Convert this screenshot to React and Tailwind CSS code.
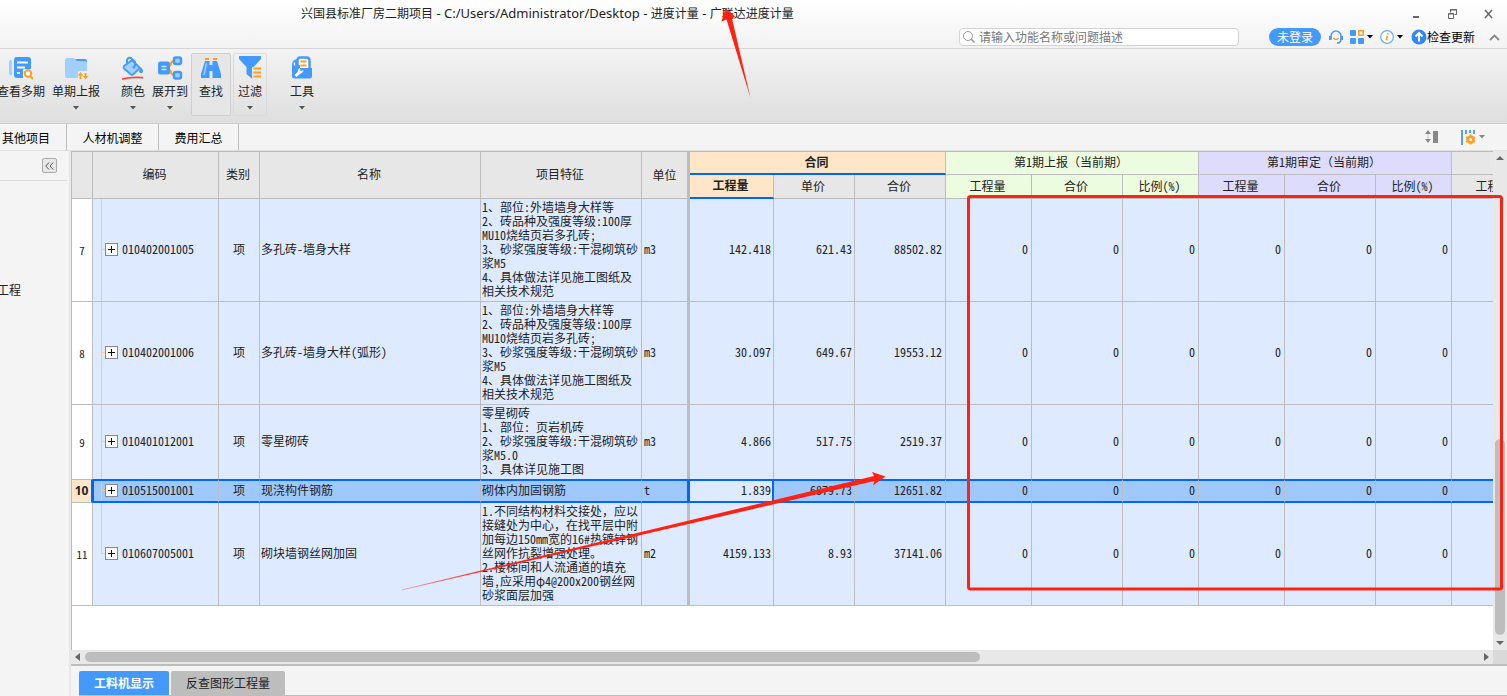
import React from 'react'

const BLUE = '#4499ff'
const ORANGE = '#ff9f1c'

const brick = [
  '1、部位:外墙墙身大样等',
  '2、砖品种及强度等级:100厚',
  'MU10烧结页岩多孔砖;',
  '3、砂浆强度等级:干混砌筑砂',
  '浆M5',
  '4、具体做法详见施工图纸及',
  '相关技术规范',
]

const rows = [
  { no: 7, code: '010402001005', name: '多孔砖-墙身大样', lines: brick, unit: 'm3', qty: '142.418', price: '621.43', total: '88502.82', height: 'h-[103px]' },
  { no: 8, code: '010402001006', name: '多孔砖-墙身大样(弧形)', lines: brick, unit: 'm3', qty: '30.097', price: '649.67', total: '19553.12', height: 'h-[103px]' },
  {
    no: 9,
    code: '010401012001',
    name: '零星砌砖',
    lines: ['零星砌砖', '1、部位: 页岩机砖', '2、砂浆强度等级:干混砌筑砂', '浆M5.0', '3、具体详见施工图'],
    unit: 'm3',
    qty: '4.866',
    price: '517.75',
    total: '2519.37',
    height: 'h-[74px]',
    beforeActive: true,
  },
  { no: 10, code: '010515001001', name: '现浇构件钢筋', lines: ['砌体内加固钢筋'], unit: 't', qty: '1.839', price: '6879.73', total: '12651.82', height: 'h-[24px]', active: true },
  {
    no: 11,
    code: '010607005001',
    name: '砌块墙钢丝网加固',
    lines: [
      '1.不同结构材料交接处，应以',
      '接缝处为中心，在找平层中附',
      '加每边150mm宽的16#热镀锌钢',
      '丝网作抗裂增强处理。',
      '2.楼梯间和人流通道的填充',
      '墙,应采用φ4@200x200钢丝网',
      '砂浆面层加强',
    ],
    unit: 'm2',
    qty: '4159.133',
    price: '8.93',
    total: '37141.06',
    height: 'h-[103px]',
    last: true,
  },
]

const columns = [
  'w-[21px]', 'w-[126px]', 'w-[41px]', 'w-[221px]', 'w-[161px]', 'w-[48px]',
  'w-[84px]', 'w-[81px]', 'w-[91px]',
  'w-[86px]', 'w-[91px]', 'w-[76px]',
  'w-[86px]', 'w-[91px]', 'w-[76px]',
  'w-[86px]',
]

function Caret({ className = 'text-[#555]' }) {
  return (
    <svg width="6" height="4" viewBox="0 0 6 4" className={className} aria-hidden="true">
      <path d="M0 0h6L3 3.5z" fill="currentColor" />
    </svg>
  )
}

/* ---------- toolbar icons ---------- */

function PeriodsIcon() {
  return (
    <svg width="24" height="24" viewBox="0 0 24 24" fill="none">
      <path d="M3 4v15H1.500Q0 19 0 17.500V6Q0 4 3 4z" fill="#9fd0ff" />
      <rect x="5" y="1" width="17" height="21" rx="3" fill={BLUE} />
      <path d="M8 6.500h11M8 11.500h8M8 17h3" stroke="#fff" strokeWidth="2" />
      <path d="M14 13h9v10h-9z" fill="#eeeeee" />
      <circle cx="19" cy="17.500" r="3.200" stroke={ORANGE} strokeWidth="2" fill="#fff" />
      <path d="M21 20l3 3" stroke={ORANGE} strokeWidth="2" />
    </svg>
  )
}

function ReportIcon() {
  return (
    <svg width="24" height="24" viewBox="0 0 24 24" fill="none">
      <path d="M11 3h10q2 0 2 2v9H11z" fill={BLUE} />
      <path d="M3 2h7l3 3h8q2 0 2 2v8h-9v7H3q-2 0-2-2V4q0-2 2-2z" fill="#9fd0ff" />
      <path d="M16.500 23v-5M21.500 17v5" stroke={ORANGE} strokeWidth="1.800" />
      <path d="M13.800 19.500l2.700-3.500 2.700 3.500zM18.800 20l2.700 3.500 2.700-3.500z" fill={ORANGE} />
    </svg>
  )
}

function ColorIcon() {
  return (
    <svg width="24" height="24" viewBox="0 0 24 24" fill="none">
      <path d="M3 10L11 4l8 8-7 6.500q-1 .8-2 0L3.500 13q-1.500-1.500-.5-3z" fill="#9fd0ff" stroke={BLUE} strokeWidth="1.800" />
      <path d="M6 7V4Q7 1 10 2l4 4v4" stroke={BLUE} strokeWidth="2" />
      <circle cx="13" cy="11" r="1.500" fill={BLUE} />
      <path d="M20 11.500q3 3 1.500 5-1.500 1-3 0-1-2 1.500-5z" fill={BLUE} />
      <path d="M1 23.500q10-2 22-1" stroke="#c9c9c9" strokeWidth="1.500" />
      <path d="M1 23q9-2.500 21-1.500" stroke="#ff4040" strokeWidth="1.500" />
    </svg>
  )
}

function ExpandIcon() {
  return (
    <svg width="26" height="24" viewBox="0 0 26 24" fill="none">
      <path d="M11 10.500q3-1 3-3t4-3M11 13.500q3 1 3 3t4 3" stroke={ORANGE} strokeWidth="2" />
      <rect x="1" y="5.500" width="12" height="13" rx="2.500" fill={BLUE} />
      <path d="M4.500 10.500h5M4.500 13.500h5" stroke="#cfe6ff" strokeWidth="1.500" />
      <rect x="17" y="1.500" width="7" height="6.500" rx="2" stroke={BLUE} strokeWidth="2.500" fill="#9fd0ff" />
      <rect x="17" y="16" width="7" height="6.500" rx="2" stroke={BLUE} strokeWidth="2.500" fill="#9fd0ff" />
    </svg>
  )
}

function FindIcon() {
  return (
    <svg width="24" height="24" viewBox="0 0 24 24" fill="none">
      <path d="M6 3h4M14 3h4" stroke={ORANGE} strokeWidth="2.200" />
      <path d="M6 5h4.500v17H2v-4zM13.500 5H18l4 13v4h-8.500z" fill={BLUE} />
      <path d="M10 9h4v6h-4z" fill={BLUE} />
      <path d="M7.500 7L5 19" stroke="#9fd0ff" strokeWidth="1.500" />
    </svg>
  )
}

function FilterIcon() {
  return (
    <svg width="24" height="24" viewBox="0 0 24 24" fill="none">
      <path d="M1 0h22v3l-7.500 8v13L8.500 18v-7L1 3z" fill={BLUE} />
      <path d="M14 11h10v13H14z" fill="#e8e8e8" />
      <path d="M15.500 12.500H23M15.500 16.500H23M15.500 20.500H23" stroke={ORANGE} strokeWidth="2" />
    </svg>
  )
}

function ToolsIcon() {
  return (
    <svg width="24" height="24" viewBox="0 0 24 24" fill="none">
      <path d="M7.500 13V4Q8 1.500 10 1.500h6q3.500 0 3.500 3V14" fill="#fff" stroke={BLUE} strokeWidth="2.400" />
      <path d="M10.500 5.500h6M10.500 9.500h6" stroke={ORANGE} strokeWidth="2.200" />
      <path d="M6.500 3Q2 4.500 2 9v11q0 2.500 2.500 2.500h15q2.500 0 2.500-2.500v-8h-6l-3-3H8z" fill={BLUE} />
      <path d="M10 4h7.500v8H10z" fill="#fff" />
      <path d="M10.500 5.500h6M10.500 9.500h6" stroke={ORANGE} strokeWidth="2" />
      <path d="M4.500 6.500v3" stroke="#fff" strokeWidth="1.500" />
      <path d="M4.500 19l3.500-3.500q-.5-2.500 2-3.500v2.500l2 .5 1-1.500q1 3-2.500 4L6.500 21z" fill="#fff" />
    </svg>
  )
}

const tools = [
  { label: '查看多期', icon: <PeriodsIcon />, box: 'w-[46px] items-start pl-2 border-transparent', end: true },
  { label: '单期上报', icon: <ReportIcon />, caret: true, box: 'w-[50px] ml-[5px] items-center border-transparent' },
  { label: '颜色', icon: <ColorIcon />, caret: true, box: 'w-7 ml-[18px] items-center border-transparent' },
  { label: '展开到', icon: <ExpandIcon />, caret: true, box: 'w-[38px] ml-1 items-center border-transparent' },
  { label: '查找', icon: <FindIcon />, box: 'w-10 ml-0.5 items-center border-[#cfcfcf] bg-[#e6e6e6]' },
  { label: '过滤', icon: <FilterIcon />, caret: true, box: 'w-[34px] ml-0.5 items-center border-[#dadada]' },
  { label: '工具', icon: <ToolsIcon />, caret: true, box: 'w-7 ml-[21px] items-center border-transparent' },
]

function TitleBar() {
  return (
    <header className="flex h-[49px] flex-col border-b border-[#d6d6d6] bg-linear-to-b from-white to-[#f2f2f2]">
      <div className="flex h-7 items-center justify-between pl-[301px] pr-3.5">
        <h1 className="whitespace-nowrap">
          兴国县标准厂房二期项目
          <span className="text-[13px]"> - C:/Users/Administrator/Desktop - </span>
          进度计量
          <span className="text-[13px]"> - </span>
          广联达进度计量
        </h1>
        <div className="flex h-6 items-center gap-[27px] text-[#666]">
          <button aria-label="最小化">
            <svg width="10" height="10" viewBox="0 0 10 10"><path d="M2 7h6v2H2z" fill="currentColor" /></svg>
          </button>
          <button aria-label="还原">
            <svg width="9" height="10" viewBox="0 0 9 10" fill="none" stroke="currentColor">
              <path d="M2.500 3.500v-3h6v5h-2M2 1h7M.5 4.500h5v5h-5zM0 5h6" />
            </svg>
          </button>
          <button aria-label="关闭">
            <svg width="9" height="10" viewBox="0 0 9 10" fill="none" stroke="currentColor" strokeWidth="1.500">
              <path d="M1 1l7 8M8 1L1 9" />
            </svg>
          </button>
        </div>
      </div>
      <div className="flex h-[18px] items-center justify-end pr-[7px]">
        <label className="mr-[30px] flex h-[18px] w-[280px] items-center gap-1 rounded-sm border border-[#d4d4d4] bg-white px-[3px]">
          <svg width="12" height="12" viewBox="0 0 12 12" fill="none" stroke="#999" aria-hidden="true">
            <circle cx="5" cy="5" r="4.500" />
            <path d="M8 8l3.500 3.500" strokeWidth="1.500" />
          </svg>
          <input
            type="text"
            aria-label="搜索功能"
            placeholder="请输入功能名称或问题描述"
            className="h-4 min-w-0 flex-1 bg-transparent pt-0.5 outline-none placeholder:text-[#777]"
          />
        </label>
        <button className="h-[18px] w-[52px] rounded-full bg-[#4499ff] leading-5 text-white">未登录</button>
        <button aria-label="客服" className="ml-2">
          <svg width="14" height="14" viewBox="0 0 14 14" fill="none">
            <path d="M2 9V6a5 5 0 0 1 10 0v3q0 4-4 4" stroke={BLUE} strokeWidth="1.500" />
            <path d="M0 6h2.500v4H0zM11.500 6H14v4h-2.500z" fill={BLUE} />
            <path d="M4.500 8q2.500 3 5 0" stroke={ORANGE} strokeWidth="1.500" />
          </svg>
        </button>
        <button aria-label="应用" className="ml-[7px] flex items-center gap-[3px]">
          <svg width="14" height="14" viewBox="0 0 14 14" fill="none">
            <rect width="6" height="6" rx="1" fill={BLUE} />
            <rect y="8" width="6" height="6" rx="1" fill={BLUE} />
            <rect x="8" y="8" width="6" height="6" rx="1" fill={BLUE} />
            <rect x="8.800" y=".8" width="4.400" height="4.400" stroke={ORANGE} strokeWidth="1.500" />
          </svg>
          <Caret className="text-black" />
        </button>
        <button aria-label="帮助" className="ml-[7px] flex items-center gap-[3px]">
          <svg width="14" height="14" viewBox="0 0 14 14" fill="none">
            <circle cx="7" cy="7" r="6.300" stroke="#6aaeff" strokeWidth="1.200" fill="#fff" />
            <path d="M7.300 6l-1 4.500M8 3l-.3 1.500" stroke={ORANGE} strokeWidth="1.700" />
          </svg>
          <Caret className="text-black" />
        </button>
        <button className="ml-2 flex items-center text-black">
          <svg width="16" height="16" viewBox="0 0 16 16" fill="none">
            <circle cx="8" cy="8" r="7.500" fill="#2f86f6" />
            <path d="M8 12.500V4.500M4.500 7.500L8 4l3.500 3.500" stroke="#fff" strokeWidth="2" />
          </svg>
          <span className="pt-0.5">检查更新</span>
        </button>
        <button aria-label="收起功能区" className="ml-3.5">
          <svg width="11" height="7" viewBox="0 0 11 7" fill="none" stroke="#888" strokeWidth="1.800">
            <path d="M1 6l4.500-4.500L10 6" />
          </svg>
        </button>
      </div>
    </header>
  )
}

function Toolbar() {
  return (
    <div className="flex h-[75px] border-b border-[#cdcdcd] bg-linear-to-b from-[#f3f3f3] to-[#dedede] pt-1">
      {tools.map((t) => (
        <button
          key={t.label}
          className={`flex h-[63px] shrink-0 flex-col rounded-xs border pt-0.5 ${t.box}`}
        >
          {t.icon}
          <span className={`flex w-full whitespace-nowrap pt-0.5 leading-5 ${t.end ? 'justify-end' : 'justify-center'}`}>{t.label}</span>
          {t.caret && <span className="flex h-3 items-center"><Caret /></span>}
        </button>
      ))}
    </div>
  )
}

function TabRow() {
  return (
    <nav className="flex h-[27px] items-stretch border-b border-[#e0e0e0] bg-[#f4f4f4] text-black">
      <a href="#other" className="flex w-[67px] items-center border-r border-[#bdbdbd] pl-0.5 pt-1">其他项目</a>
      <a href="#resources" className="flex w-[92px] items-center justify-center border-r border-[#bdbdbd] pt-1">人材机调整</a>
      <a href="#summary" className="flex w-20 items-center justify-center border-r border-[#bdbdbd] pt-1">费用汇总</a>
      <div className="ml-auto flex items-center pr-[22px]">
        <button aria-label="行高">
          <svg width="14" height="14" viewBox="0 0 14 14" fill="#888">
            <path d="M0 4l3-4 3 4zM0 9l3 4 3-4zM8 1h5v12H8z" />
            <path d="M2.500 3h1v7h-1z" opacity=".4" />
          </svg>
        </button>
        <button aria-label="列设置" className="ml-[22px] flex items-center gap-0.5">
          <svg width="16" height="16" viewBox="0 0 16 16" fill="none">
            <path d="M1 1v15M5 1v4M9 1v3M13 1v4" stroke={BLUE} strokeWidth="1.800" />
            <circle cx="9.500" cy="10.500" r="3" stroke={ORANGE} strokeWidth="2.600" />
            <path d="M9.500 5.500v10M5 8l9 5M14 8l-9 5" stroke={ORANGE} strokeWidth="1.800" />
            <circle cx="9.500" cy="10.500" r="1.500" fill="#fff" />
          </svg>
          <Caret className="text-[#888]" />
        </button>
      </div>
    </nav>
  )
}

function HeadCell({ className = 'bg-[#e7e7e7]', line = 'border-b border-[#bdbdbd]', ...rest }) {
  return <th className={`border-r border-r-[#bdbdbd] p-0 pb-0.5 pr-0.5 text-center font-normal ${line} ${className}`} {...rest} />
}

function Row({ row }) {
  const { active } = row
  let edge = 'border-b border-b-[#bdbdbd]'
  if (active) edge = 'border-y-2 border-y-[#0066ff] bg-[#9fc8fe]'
  if (row.beforeActive) edge = ''
  const cell = `p-0 pb-0.5 border-r border-r-[#bdbdbd] ${edge}`

  return (
    <tr className={row.height}>
      <th
        className={
          active
            ? "border-y border-r-2 border-y-[#bdbdbd] border-r-[#0066ff] bg-[#ffe6c8] p-0 text-center font-['Noto_Sans'] text-xs font-bold"
            : `border-r border-r-[#bdbdbd] bg-white p-0 text-center text-[11px] font-normal ${edge}`
        }
      >
        {row.no}
      </th>
      <td className={`relative ${cell} ${active ? 'border-l border-l-[#0066ff]' : ''}`}>
        <span className={`absolute top-0 w-px bg-[#ffc98c] ${active ? 'left-[7px]' : 'left-2'} ${row.last ? 'h-1/2' : 'h-full'}`} />
        <div className={`flex items-center ${active ? 'pl-[7px]' : 'pl-2'}`}>
          <span className="h-px w-1 bg-[#ffc98c]" />
          <button aria-label="展开" className="flex size-[13px] items-center justify-center border border-[#888] bg-white">
            <svg width="7" height="7" viewBox="0 0 7 7"><path d="M3 0h1v7H3zM0 3h7v1H0z" fill="#111" /></svg>
          </button>
          <span className="ml-1">{row.code}</span>
        </div>
      </td>
      <td className={`${cell} text-center`}>项</td>
      <td className={`${cell} pl-px`}>{row.name}</td>
      <td className={`${cell} whitespace-pre pl-px leading-[14px]`}>{row.lines.join('\n')}</td>
      <td className={`border-r-[3px] p-0 pb-0.5 pl-0.5 ${edge} ${active ? 'border-r-[#0066ff]' : 'border-r-[#bdbdbd]'}`}>{row.unit}</td>
      <td className={active ? 'border-y-2 border-r-2 border-[#0066ff] bg-[#deeaff] p-0 pb-0.5 pr-px text-right' : `${cell} pr-0.5 text-right`}>
        {row.qty}
      </td>
      <td className={`${cell} pr-0.5 text-right`}>{row.price}</td>
      <td className={`${cell} pr-[3px] text-right`}>{row.total}</td>
      {[0, 1, 2, 3, 4, 5].map((i) => (
        <td key={i} className={`${cell} pr-[3px] text-right`}>0</td>
      ))}
      <td className={cell}></td>
    </tr>
  )
}

function Grid() {
  const green = 'bg-[#ecfcde]'
  const violet = 'bg-[#dddcfc]'
  return (
    <table className="w-[1466px] table-fixed border-separate border-spacing-0 bg-[#deeaff] font-['Noto_Sans_Mono_CJK_SC','Noto_Sans_CJK_SC',monospace] text-xs text-[#222]">
      <colgroup>
        {columns.map((w, i) => <col key={i} className={w} />)}
      </colgroup>
      <thead>
        <tr className="h-[23px]">
          <HeadCell rowSpan={2} aria-label="序号" />
          <HeadCell rowSpan={2}>编码</HeadCell>
          <HeadCell rowSpan={2}>类别</HeadCell>
          <HeadCell rowSpan={2}>名称</HeadCell>
          <HeadCell rowSpan={2}>项目特征</HeadCell>
          <th rowSpan={2} className="border-b border-r-[3px] border-[#bdbdbd] bg-[#e7e7e7] p-0 text-center font-normal">单位</th>
          <HeadCell colSpan={3} className="bg-[#ffe6c8]" line="border-b-2 border-b-[#0066ff]"><b>合同</b></HeadCell>
          <HeadCell colSpan={3} className={green}>第1期上报（当前期）</HeadCell>
          <HeadCell colSpan={3} className={violet}>第1期审定（当前期）</HeadCell>
          <HeadCell aria-label="下一期" />
        </tr>
        <tr className="h-6">
          <HeadCell className="bg-[#ffe6c8]" line="border-b-2 border-b-[#0066ff]"><b>工程量</b></HeadCell>
          <HeadCell>单价</HeadCell>
          <HeadCell>合价</HeadCell>
          <HeadCell className={green}>工程量</HeadCell>
          <HeadCell className={green}>合价</HeadCell>
          <HeadCell className={green}>比例(%)</HeadCell>
          <HeadCell className={violet}>工程量</HeadCell>
          <HeadCell className={violet}>合价</HeadCell>
          <HeadCell className={violet}>比例(%)</HeadCell>
          <HeadCell>工程量</HeadCell>
        </tr>
      </thead>
      <tbody>
        {rows.map((row) => <Row key={row.no} row={row} />)}
      </tbody>
    </table>
  )
}

function SidePanel() {
  return (
    <aside className="w-[71px] shrink-0 border-r-2 border-[#e8e8e8] bg-[#f4f4f4]">
      <div className="mr-0.5 flex h-[30px] items-center justify-end border-b border-[#dcdcdc] pr-2.5">
        <button aria-label="折叠" className="flex size-[15px] items-center justify-center rounded-xs border border-[#aaa] bg-[#e8e8e8]">
          <svg width="9" height="8" viewBox="0 0 9 8" fill="none" stroke="#555">
            <path d="M4 .5L.8 4 4 7.500M8.200.5L5 4l3.200 3.500" />
          </svg>
        </button>
      </div>
      <div className="mt-[100px] flex h-5 w-[21px] items-center justify-end whitespace-nowrap">工程</div>
    </aside>
  )
}

/* Red pen marks drawn over the window */
function Marks() {
  return (
    <svg className="pointer-events-none absolute left-0 top-0" width="1507" height="696" viewBox="0 0 1507 696" fill="none" aria-hidden="true">
      <defs>
        <linearGradient id="fade" gradientUnits="userSpaceOnUse" x1="402" y1="590" x2="500" y2="567">
          <stop offset="0" stopColor="#ff2212" stopOpacity="0.4" />
          <stop offset="1" stopColor="#ff2212" />
        </linearGradient>
      </defs>
      <path d="M725.500 8l-4 13.500 5-2L750.500 98l-18.500-79.500 3-2z" fill="#ff2212" />
      <path d="M402 589.500L874 476l-2-4 13.500 4.500L873 485.500l1.500-4.500L402 590.300z" fill="url(#fade)" />
      <rect x="968.500" y="196.500" width="533" height="392.500" rx="2" stroke="#ff2212" strokeWidth="3" />
    </svg>
  )
}

export default function App() {
  return (
    <div className="relative flex min-h-screen flex-col overflow-hidden bg-[#f4f4f4] font-['Noto_Sans','Noto_Sans_CJK_SC',sans-serif] text-xs text-[#222]">
      <TitleBar />
      <Toolbar />
      <TabRow />
      <main className="flex flex-1">
        <SidePanel />
        <div className="flex min-w-0 flex-1 flex-col">
          <div className="flex flex-1">
            <div className="min-w-0 flex-1 overflow-hidden border-l border-t border-[#bdbdbd] bg-white">
              <Grid />
            </div>
            <div className="flex w-3.5 flex-col items-center bg-[#e8e8e8] py-[5px] text-[#666]">
              <svg width="8" height="4" viewBox="0 0 8 4"><path d="M0 4l4-4 4 4z" fill="currentColor" /></svg>
              <div className="grow-[280]" />
              <div className="w-2.5 grow-[196] rounded-full bg-[#bdbdbd]" />
              <svg className="mt-1.5" width="8" height="4" viewBox="0 0 8 4"><path d="M0 0h8L4 4z" fill="currentColor" /></svg>
            </div>
          </div>
          <div className="flex h-4 border-b-2 border-[#bdbdbd] bg-[#e8e8e8] text-[#666]">
            <div className="flex flex-1 items-center px-1">
              <svg width="5" height="8" viewBox="0 0 5 8"><path d="M5 0v8L0 4z" fill="currentColor" /></svg>
              <div className="ml-[5px] h-2.5 grow-[896] rounded-full bg-[#bdbdbd]" />
              <div className="grow-[504]" />
              <svg width="5" height="8" viewBox="0 0 5 8"><path d="M0 0v8l5-4z" fill="currentColor" /></svg>
            </div>
            <div className="w-3.5 bg-[#d9d9d9]" />
          </div>
          <div className="flex h-[30px] items-end pl-2">
            <div className="flex h-[25px] flex-1 gap-0.5 border-b border-[#bdbdbd]">
              <button className="w-[90px] rounded-t-xs bg-[#4499ff] pt-0.5 font-bold text-white">工料机显示</button>
              <button className="w-[114px] rounded-t-xs bg-[#bdbdbd] pt-0.5">反查图形工程量</button>
            </div>
          </div>
        </div>
      </main>
      <Marks />
    </div>
  )
}
